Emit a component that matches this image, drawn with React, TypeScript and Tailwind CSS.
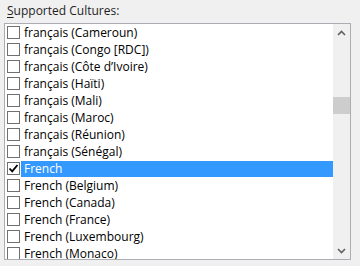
import React from 'react';

const cultures = [
  { name: 'français (Cameroun)', checked: false },
  { name: 'français (Congo [RDC])', checked: false },
  { name: 'français (Côte d’Ivoire)', checked: false },
  { name: 'français (Haïti)', checked: false },
  { name: 'français (Mali)', checked: false },
  { name: 'français (Maroc)', checked: false },
  { name: 'français (Réunion)', checked: false },
  { name: 'français (Sénégal)', checked: false },
  { name: 'French', checked: true, selected: true },
  { name: 'French (Belgium)', checked: false },
  { name: 'French (Canada)', checked: false },
  { name: 'French (France)', checked: false },
  { name: 'French (Luxembourg)', checked: false },
  { name: 'French (Monaco)', checked: false },
];

function CheckBox({ checked }: { checked: boolean }) {
  return (
    <div className="w-[13px] h-[13px] border border-[#707070] bg-white flex items-center justify-center shrink-0">
      {checked && (
        <svg width="11" height="11" viewBox="0 0 11 11">
          <path d="M1.5 5.5 L4.2 8.3 L9.5 2" fill="none" stroke="#000" strokeWidth="1.8" />
        </svg>
      )}
    </div>
  );
}

export default function App() {
  return (
    <div className="w-[360px] h-[266px] bg-[#f0f0f0] overflow-hidden text-[12px] text-black" style={{ fontFamily: '"Open Sans", "Noto Sans", sans-serif' }}>
      <div className="pl-[7px] pt-[3px] h-[23px] leading-[16px] text-[#1e1e1e]">
        <span className="underline underline-offset-2">S</span>upported Cultures:
      </div>
      <div className="ml-[4px] w-[347px] h-[237px] border border-[#abadb3] bg-white flex">
        <div className="flex-1 overflow-hidden">
          {cultures.map((c) => (
            <div key={c.name} className="h-[17px] flex items-center pl-[2px]">
              <CheckBox checked={c.checked} />
              <div className={`ml-[1px] flex-1 h-[16px] leading-[16px] pl-[3px] ${c.selected ? 'bg-[#3399ff] text-white' : ''}`}>
                {c.name}
              </div>
            </div>
          ))}
        </div>
        <div className="w-[17px] bg-[#f0f0f0] flex flex-col items-center justify-between">
          <div className="h-[17px] flex items-center justify-center">
            <svg width="9" height="6" viewBox="0 0 9 6">
              <path d="M1 5 L4.5 1.5 L8 5" fill="none" stroke="#606060" strokeWidth="1.6" />
            </svg>
          </div>
          <div className="flex-1 w-full relative">
            <div className="absolute left-0 right-0 top-[56px] h-[17px] bg-[#cdcdcd]" />
          </div>
          <div className="h-[17px] flex items-center justify-center">
            <svg width="9" height="6" viewBox="0 0 9 6">
              <path d="M1 1 L4.5 4.5 L8 1" fill="none" stroke="#606060" strokeWidth="1.6" />
            </svg>
          </div>
        </div>
      </div>
    </div>
  );
}
